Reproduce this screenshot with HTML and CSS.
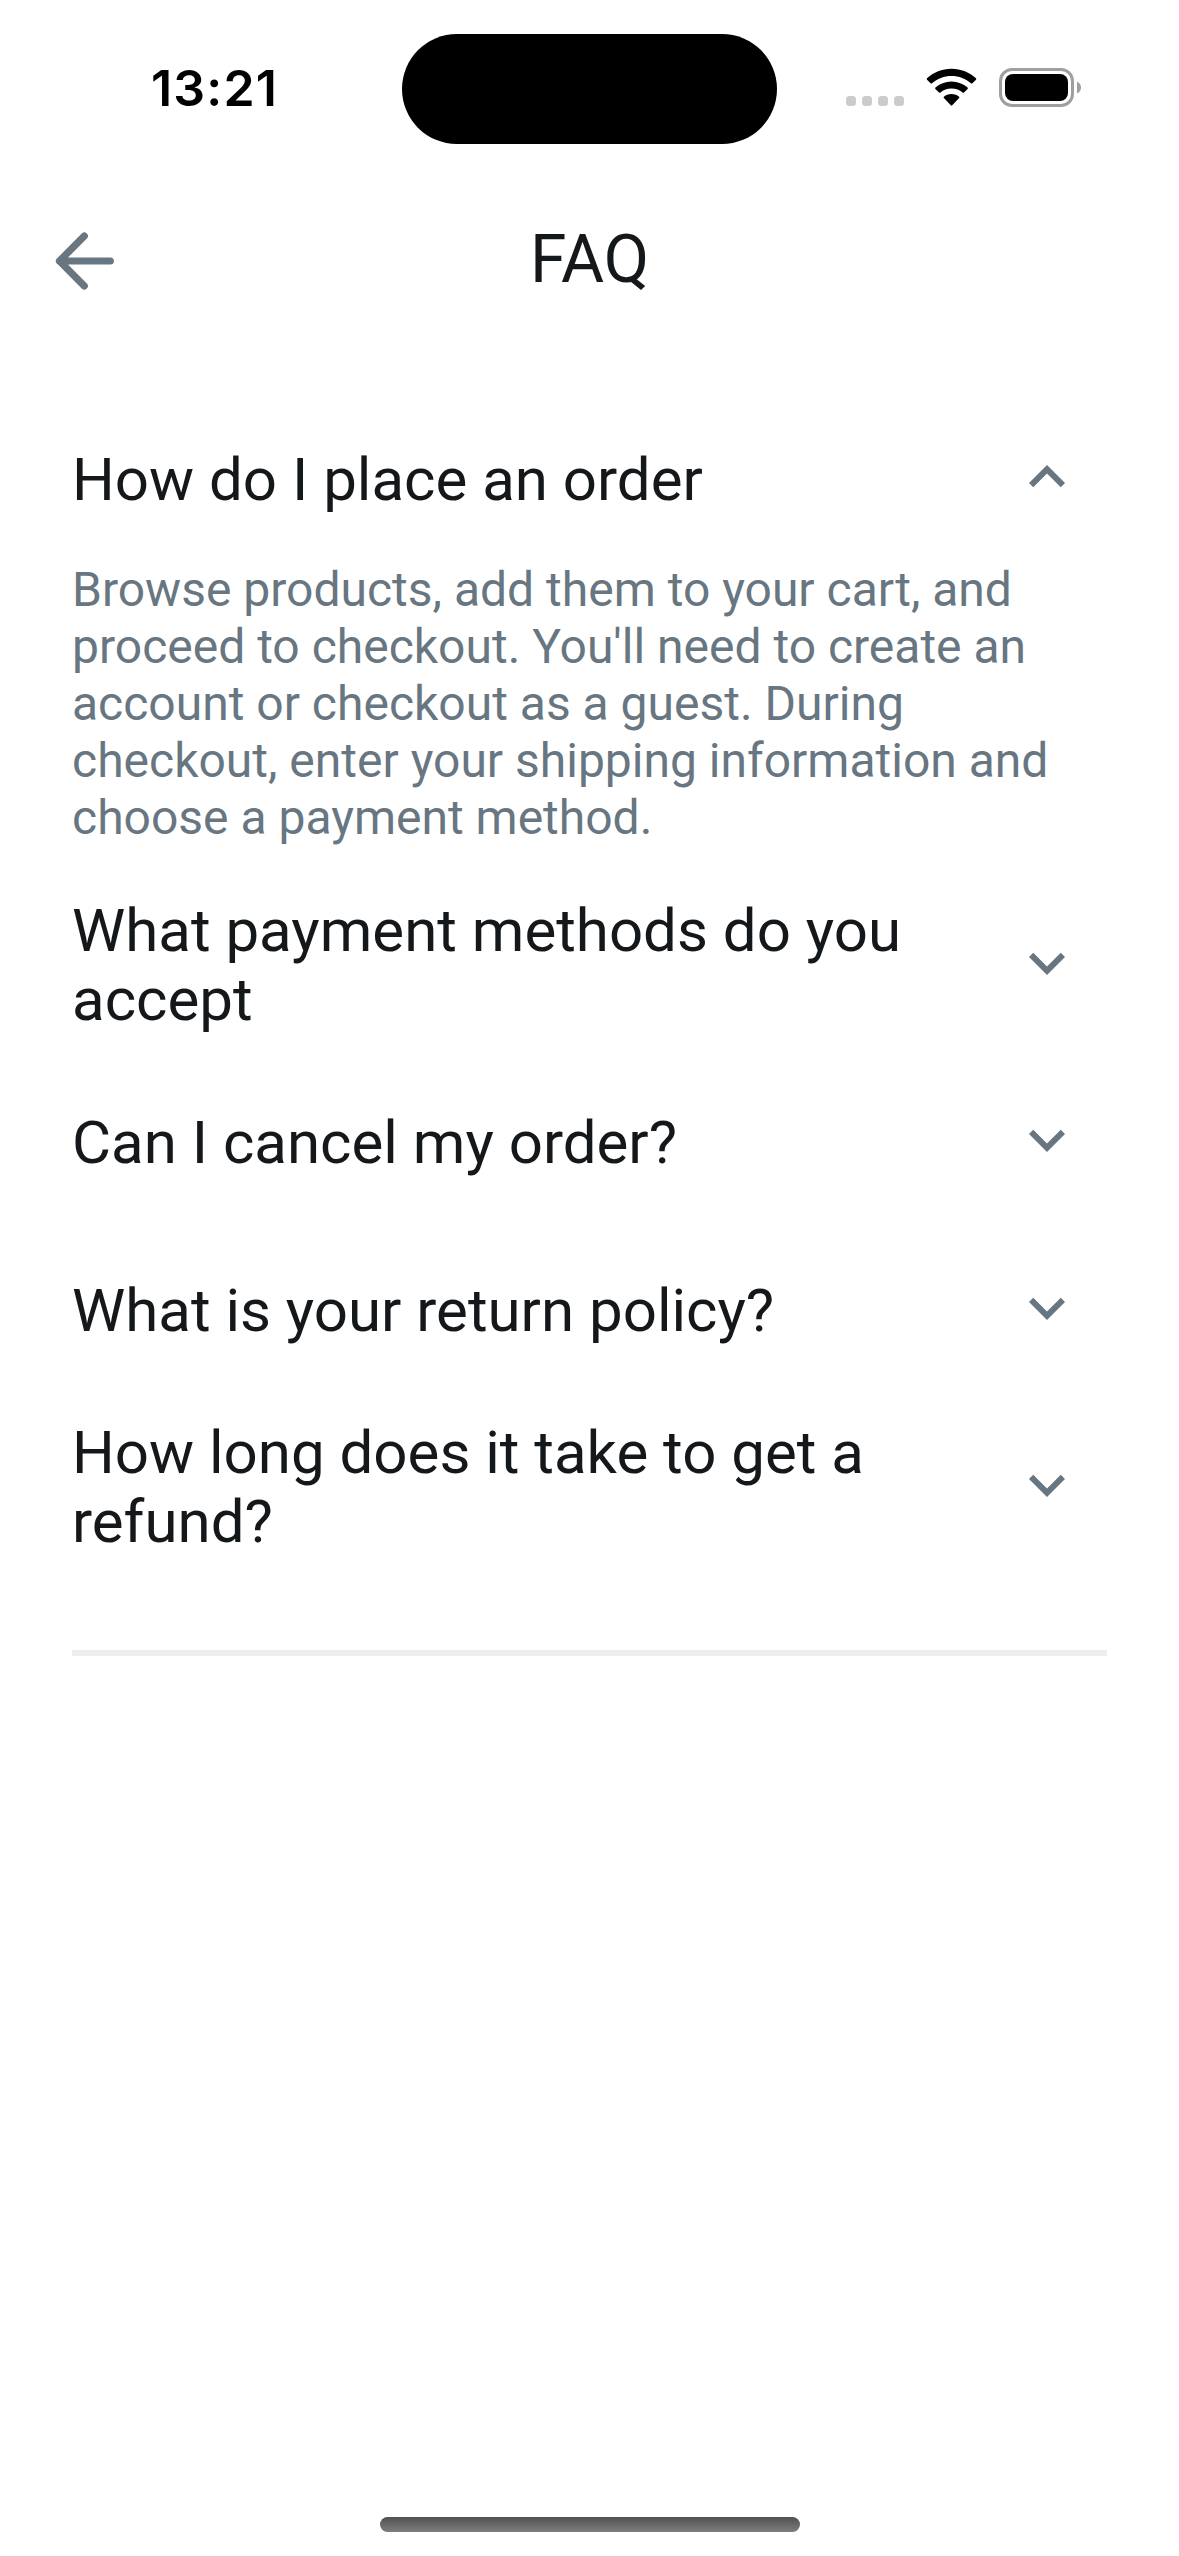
FILE: index.html
```html
<!DOCTYPE html>
<html lang="en">
<head>
<meta charset="utf-8">
<title>FAQ</title>
<link rel="stylesheet" href="styles.css">
</head>
<body>
<div class="status">
  <time class="clock">13:21</time>
  <div class="island"></div>
  <div class="indicators">
    <svg class="signal" width="58" height="10" viewBox="0 0 58 10"><rect width="10" height="10" rx="3.5"/><rect x="16" width="10" height="10" rx="3.5"/><rect x="32" width="10" height="10" rx="3.5"/><rect x="48" width="10" height="10" rx="3.5"/></svg>
    <svg class="wifi" width="51" height="39" viewBox="0 0 51 39"><path d="M25.5 .7C35 .7 43.600 4.200 50 10.300Q50.600 11 50 11.700L46.400 15.200Q45.700 15.800 45 15.200C39.800 10.500 33 7.900 25.500 7.900S11.200 10.500 6 15.200Q5.300 15.800 4.600 15.200L1 11.700Q.4 11 1 10.300C7.400 4.200 16 .7 25.500 .7Z"/><path d="M25.500 13.400C31.800 13.400 37.300 15.700 41.600 19.500Q42.200 20.200 41.600 20.900L38 24.400Q37.300 25 36.600 24.400C33.600 21.900 29.800 20.500 25.500 20.500S17.400 21.900 14.400 24.400Q13.700 25 13 24.400L9.400 20.900Q8.800 20.200 9.400 19.500C13.700 15.700 19.200 13.400 25.500 13.400Z"/><path d="M25.500 26C28.500 26 31.100 27 33.100 28.700Q33.800 29.400 33.100 30.100L26.200 37.300Q25.500 38 24.800 37.300L17.900 30.100Q17.200 29.400 17.900 28.700C19.900 27 22.500 26 25.500 26Z"/></svg>
    <svg class="battery" width="83" height="39" viewBox="0 0 83 39"><rect x="1.500" y="1.500" width="72" height="36" rx="11.500" fill="none" stroke="#9f9f9f" stroke-width="3"/><rect x="6" y="6" width="63" height="27" rx="8"/><path d="M78 13.500Q82 15.500 82 19.500T78 25.500Z" fill="#9f9f9f"/></svg>
  </div>
</div>
<header class="header">
  <svg class="back" width="60" height="60" viewBox="0 0 60 60"><path d="M56.300 30H5.500M30.300 5L5.500 30L30.300 55"/></svg>
  <h1 class="title">FAQ</h1>
</header>
<main class="faq">
  <section class="item"><h2 class="question">How do I place an order</h2><svg class="chevron" viewBox="0 0 24 24"><path d="M12 8l-6 6 1.410 1.410L12 10.830l4.590 4.580L18 14z"/></svg></section>
  <p class="answer">Browse products, add them to your cart, and<br>proceed to checkout. You'll need to create an<br>account or checkout as a guest. During<br>checkout, enter your shipping information and<br>choose a payment method.</p>
  <section class="item two"><h2 class="question">What payment methods do you<br>accept</h2><svg class="chevron" viewBox="0 0 24 24"><path d="M16.590 8.590L12 13.170 7.410 8.590 6 10l6 6 6-6z"/></svg></section>
  <section class="item"><h2 class="question">Can I cancel my order?</h2><svg class="chevron" viewBox="0 0 24 24"><path d="M16.590 8.590L12 13.170 7.410 8.590 6 10l6 6 6-6z"/></svg></section>
  <section class="item"><h2 class="question">What is your return policy?</h2><svg class="chevron" viewBox="0 0 24 24"><path d="M16.590 8.590L12 13.170 7.410 8.590 6 10l6 6 6-6z"/></svg></section>
  <section class="item two"><h2 class="question">How long does it take to get a<br>refund?</h2><svg class="chevron" viewBox="0 0 24 24"><path d="M16.590 8.590L12 13.170 7.410 8.590 6 10l6 6 6-6z"/></svg></section>
</main>
<div class="home"></div>
</body>
</html>
```
FILE: styles.css
```css
* { box-sizing: border-box; }
body {
  margin: 0;
  width: 1179px;
  height: 2556px;
  display: flex;
  flex-direction: column;
  background: #fff;
  color: #14181b;
  font-family: Roboto, sans-serif;
}
h1, h2, p { margin: 0; font-weight: 400; }
svg { display: block; flex: none; }
.status {
  height: 177px;
  flex: none;
  display: grid;
  grid-template-columns: 402px 375px 402px;
  align-items: start;
}
.clock {
  padding: 57px 0 0 151px;
  font: 600 50px/62px Inter, sans-serif;
  letter-spacing: 1.2px;
  color: #000;
}
.island {
  margin-top: 34px;
  height: 110px;
  border-radius: 55px;
  background: #000;
}
.indicators { display: flex; padding: 68px 0 0 69px; }
.signal { margin: 28px 22px 0 0; fill: #cbcbcb; }
.battery { margin-left: 22px; }
.header {
  height: 168px;
  flex: none;
  display: grid;
  grid-template-columns: 1fr auto 1fr;
  align-items: center;
}
.back { margin-left: 54px; fill: none; stroke: #677681; stroke-width: 7.2; stroke-linecap: round; stroke-linejoin: round; }
.title { padding-bottom: 2px; font-size: 66px; line-height: 78px; }
.faq {
  margin: 50px 72px 0;
  padding-bottom: 70px;
  border-bottom: 6px solid #eee;
}
.item {
  height: 168px;
  display: flex;
  align-items: center;
  justify-content: space-between;
  padding-right: 24px;
}
.item.two { height: 186px; }
.question { font-size: 60px; line-height: 69px; }
.chevron { width: 72px; height: 72px; margin-bottom: 4px; fill: #677681; }
.answer { margin: -2px 0 26px; color: #677681; font-size: 48px; line-height: 57px; }
.home {
  width: 420px;
  height: 15px;
  margin: auto 0 24px 380px;
  border-radius: 8px;
  background: linear-gradient(#505050, #7e7e7e);
}
```
